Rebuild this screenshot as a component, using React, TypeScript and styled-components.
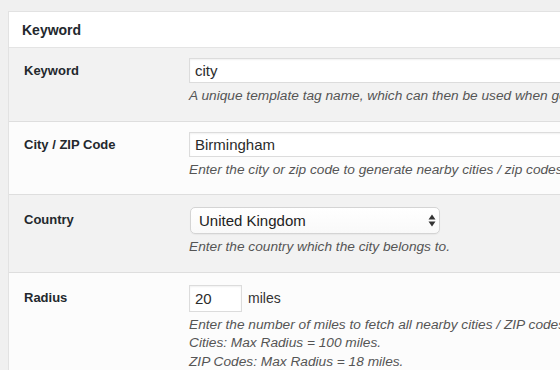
import styled, { createGlobalStyle } from "styled-components";

const GlobalStyle = createGlobalStyle`
  html, body {
    margin: 0;
    padding: 0;
    background: #f0f0f0;
    overflow: hidden;
  }
  body {
    font-family: "Liberation Sans", Arial, sans-serif;
    color: #23282d;
  }
`;

const Page = styled.div`
  padding: 11px 0 0 8px;
  width: 760px;
`;

const Panel = styled.div`
  border: 1px solid #e2e2e2;
  background: #fff;
`;

const PanelHeader = styled.h2`
  margin: 0;
  height: 35px;
  padding: 0 13px;
  display: flex;
  align-items: center;
  font-size: 14px;
  font-weight: 700;
  background: #fff;
  border-bottom: 1px solid #e4e4e4;
`;

const Row = styled.div<{ $alt?: boolean; $top: number }>`
  display: grid;
  grid-template-columns: 180px 1fr;
  padding: ${(p) => p.$top}px 0 15px;
  background: ${(p) => (p.$alt ? "#f2f2f2" : "#fcfcfc")};
  border-bottom: 1px solid #dedede;
`;

const Label = styled.div`
  padding: 3px 0 0 15px;
  font-size: 13px;
  font-weight: 700;
  line-height: 19px;
  color: #23282d;
`;

const Field = styled.div`
  display: flex;
  flex-direction: column;
  align-items: flex-start;
`;

const TextInput = styled.input`
  box-sizing: border-box;
  width: 420px;
  height: 25px;
  padding: 0 5px;
  border: 1px solid #dcdcdc;
  box-shadow: inset 0 1px 2px rgba(0, 0, 0, 0.06);
  background: #fff;
  font-family: "Liberation Sans", Arial, sans-serif;
  font-size: 15px;
  color: #2b2b2b;
  outline: none;
`;

const SmallInput = styled(TextInput)`
  width: 53px;
  height: 27px;
`;

const Inline = styled.div`
  display: flex;
  align-items: center;
  gap: 6px;
  font-size: 14px;
  color: #333;
`;

const SelectWrap = styled.div`
  position: relative;
  margin-left: 1px;
`;

const Select = styled.select`
  appearance: none;
  -webkit-appearance: none;
  box-sizing: border-box;
  width: 250px;
  height: 27px;
  padding: 0 24px 0 8px;
  border: 1px solid #d4d4d4;
  border-radius: 5px;
  background: linear-gradient(#fff, #f9f9f9);
  box-shadow: 0 1px 1px rgba(0, 0, 0, 0.04);
  font-family: "Liberation Sans", Arial, sans-serif;
  font-size: 15px;
  color: #222;
  outline: none;
`;

const Arrows = styled.svg`
  position: absolute;
  right: 4px;
  top: 7px;
  pointer-events: none;
`;

const Desc = styled.p`
  margin: 4px 0 0;
  font-size: 13.7px;
  font-style: italic;
  line-height: 18.5px;
  color: #555;
  white-space: nowrap;
`;

export default function App() {
  return (
    <Page>
      <GlobalStyle />
      <Panel>
        <PanelHeader>Keyword</PanelHeader>
        <Row $alt $top={10}>
          <Label>Keyword</Label>
          <Field>
            <TextInput defaultValue="city" />
            <Desc>A unique template tag name, which can then be used when generating content.</Desc>
          </Field>
        </Row>
        <Row $top={10}>
          <Label>City / ZIP Code</Label>
          <Field>
            <TextInput defaultValue="Birmingham" />
            <Desc>Enter the city or zip code to generate nearby cities / zip codes for.</Desc>
          </Field>
        </Row>
        <Row $alt $top={12}>
          <Label>Country</Label>
          <Field>
            <SelectWrap>
              <Select defaultValue="uk">
                <option value="uk">United Kingdom</option>
                <option value="us">United States</option>
              </Select>
              <Arrows width="8" height="13" viewBox="0 0 8 13">
                <path d="M4 0.5 L7.5 5.5 H0.5 Z" fill="#333" />
                <path d="M4 12.5 L7.5 7.5 H0.5 Z" fill="#333" />
              </Arrows>
            </SelectWrap>
            <Desc>Enter the country which the city belongs to.</Desc>
          </Field>
        </Row>
        <Row $top={12}>
          <Label>Radius</Label>
          <Field>
            <Inline>
              <SmallInput defaultValue="20" />
              <span>miles</span>
            </Inline>
            <Desc>
              Enter the number of miles to fetch all nearby cities / ZIP codes for.
              <br />
              Cities: Max Radius = 100 miles.
              <br />
              ZIP Codes: Max Radius = 18 miles.
            </Desc>
          </Field>
        </Row>
      </Panel>
    </Page>
  );
}
